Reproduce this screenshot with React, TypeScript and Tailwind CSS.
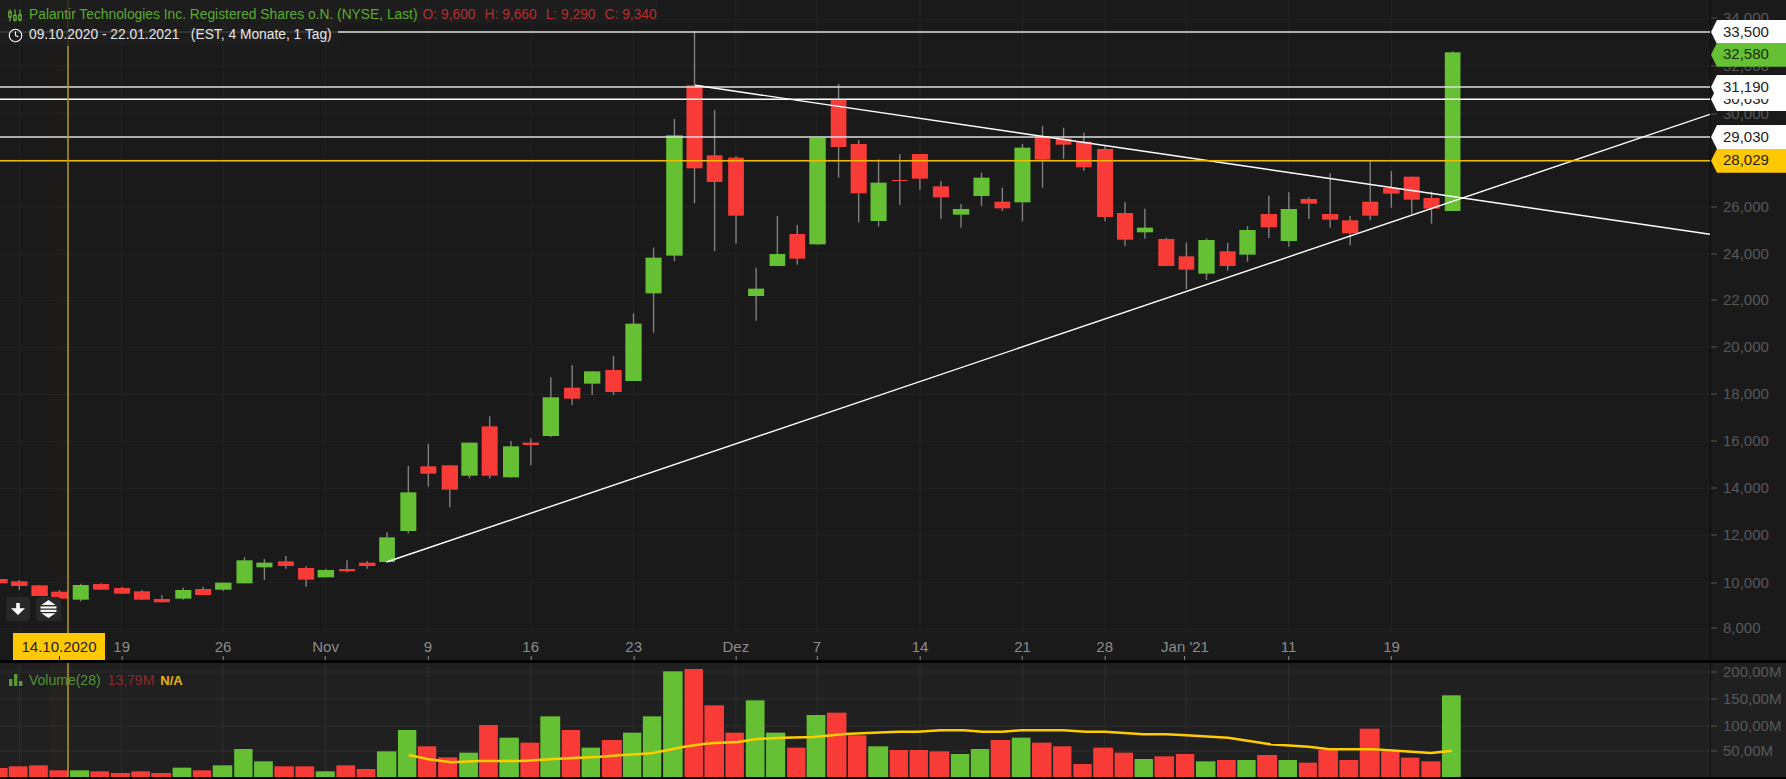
import { Clock } from "lucide-react";

type C = [number, number, number, number, number, number, "r" | "g"];

const GREEN = "#66c033";
const RED = "#f93b37";
const Z3 = 600 / 1568;
const Z2 = 586 / 1568;

const seg = (ox: number, oy: number, sx: number, sy: number, rows: C[]) =>
  rows.map(([l, r, wt, bt, bb, wb, c]) => ({
    x: ox + l * sx,
    w: (r - l) * sx,
    wt: oy + wt * sy,
    bt: oy + bt * sy,
    bb: oy + bb * sy,
    wb: oy + wb * sy,
    c,
  }));

const candles = [
  ...seg(0, 500, Z3, 1 / 3, [
    [-22, 20, 237, 237, 250, 250, "r"],
    [29, 72, 240, 244, 258, 270, "r"],
    [82, 125, 256, 256, 288, 288, "r"],
    [134, 177, 270, 275, 296, 296, "r"],
    [190, 232, 251, 255, 299, 304, "g"],
    [243, 285, 250, 252, 269, 269, "r"],
    [298, 340, 260, 264, 281, 281, "r"],
    [350, 392, 270, 274, 299, 299, "r"],
    [402, 444, 285, 297, 307, 307, "r"],
    [458, 500, 263, 270, 296, 299, "g"],
    [510, 552, 260, 267, 285, 285, "r"],
    [562, 605, 248, 248, 269, 273, "g"],
    [618, 660, 171, 181, 250, 250, "g"],
    [670, 712, 177, 188, 202, 240, "g"],
    [726, 768, 168, 184, 198, 206, "r"],
    [779, 821, 199, 204, 239, 260, "r"],
    [830, 873, 206, 210, 232, 232, "g"],
    [886, 928, 181, 207, 214, 217, "r"],
    [938, 981, 183, 188, 198, 206, "r"],
    [991, 1032, 97, 112, 186, 186, "g"],
  ]),
  ...seg(360, 300, 1 / 3, 1 / 3, [
    [121, 169, 498, 577, 693, 700, "g"],
    [181, 229, 432, 499, 521, 560, "r"],
    [245, 294, 496, 496, 569, 622, "r"],
    [304, 353, 428, 428, 527, 535, "g"],
    [365, 413, 349, 379, 527, 536, "r"],
    [429, 477, 423, 439, 532, 532, "g"],
    [488, 537, 415, 428, 435, 496, "r"],
    [548, 597, 232, 292, 408, 412, "g"],
    [612, 661, 195, 263, 296, 315, "r"],
    [672, 721, 214, 214, 251, 285, "g"],
    [736, 785, 168, 210, 276, 285, "r"],
    [796, 845, 40, 71, 243, 243, "g"],
  ]),
  ...seg(600, 60, Z3, 1 / 3, [
    [119, 161, 563, 593, 700, 818, "g"],
    [173, 216, 177, 226, 587, 603, "g"],
    [226, 268, -87, 76, 325, 430, "r"],
    [279, 320, 150, 286, 366, 573, "r"],
    [335, 376, 288, 293, 467, 551, "r"],
    [387, 429, 623, 686, 708, 782, "g"],
    [443, 484, 468, 582, 618, 618, "g"],
    [495, 536, 495, 522, 596, 614, "r"],
    [547, 590, 233, 233, 553, 553, "g"],
    [603, 644, 72, 120, 261, 353, "r"],
    [655, 697, 240, 252, 400, 487, "r"],
    [707, 749, 298, 368, 483, 500, "g"],
    [763, 804, 282, 360, 363, 435, "r"],
    [815, 857, 282, 282, 356, 390, "r"],
    [870, 912, 363, 379, 412, 477, "r"],
    [922, 965, 432, 447, 464, 503, "g"],
    [976, 1018, 338, 353, 408, 438, "g"],
    [1031, 1072, 383, 425, 445, 453, "r"],
    [1083, 1125, 252, 263, 427, 484, "g"],
    [1136, 1177, 198, 230, 299, 383, "r"],
    [1191, 1232, 203, 236, 254, 297, "r"],
    [1244, 1285, 218, 245, 322, 333, "r"],
    [1299, 1341, 258, 267, 471, 484, "r"],
    [1351, 1393, 427, 459, 539, 558, "r"],
    [1403, 1445, 446, 503, 517, 536, "g"],
    [1459, 1501, 533, 537, 618, 618, "r"],
    [1512, 1553, 548, 589, 629, 687, "r"],
  ]),
  ...seg(1100, 170, 1 / 3, 1 / 3, [
    [295, 344, 205, 210, 311, 330, "g"],
    [359, 407, 218, 244, 288, 302, "r"],
    [418, 467, 168, 180, 254, 275, "g"],
    [482, 531, 77, 132, 172, 204, "r"],
    [542, 591, 67, 117, 213, 230, "g"],
    [602, 651, 82, 87, 101, 147, "r"],
    [666, 715, 10, 132, 149, 173, "r"],
    [726, 775, 138, 151, 190, 226, "r"],
  ]),
  ...seg(1200, 0, Z2, 1 / 3, [
    [434, 477, 482, 605, 647, 660, "r"],
    [490, 534, 513, 564, 581, 623, "r"],
    [545, 588, 530, 530, 599, 642, "r"],
    [598, 641, 575, 594, 626, 671, "r"],
    [655, 697, 154, 157, 633, 633, "g"],
  ]),
];

type B = [number, number, number, "r" | "g"];
const bars = (ox: number, rows: B[]) =>
  rows.map(([l, r, t, c]) => ({
    x: ox + l * Z3,
    w: (r - l) * Z3,
    y: 500 + t / 3 - 663,
    c,
  }));

const volume = [
  ...bars(0, [
    [-30, 20, 804, "r"], [23, 72, 799, "r"], [76, 125, 796, "r"], [129, 178, 811, "r"],
    [183, 233, 811, "g"], [236, 285, 814, "r"], [289, 340, 819, "r"], [343, 392, 814, "r"],
    [395, 447, 819, "r"], [451, 500, 803, "g"], [504, 552, 811, "r"], [556, 607, 796, "g"],
    [612, 660, 747, "g"], [664, 713, 784, "g"], [717, 768, 799, "r"], [772, 821, 799, "r"],
    [825, 875, 814, "g"], [879, 928, 796, "r"], [932, 981, 807, "r"], [985, 1036, 754, "g"],
    [1040, 1088, 690, "g"], [1092, 1140, 739, "r"], [1145, 1195, 772, "r"], [1200, 1249, 758, "g"],
    [1252, 1301, 675, "r"], [1305, 1356, 713, "g"], [1360, 1409, 728, "r"], [1412, 1464, 649, "g"],
    [1468, 1516, 690, "r"], [1520, 1568, 743, "g"],
  ]),
  ...bars(600, [
    [5, 57, 720, "r"], [60, 108, 698, "g"], [112, 160, 649, "g"], [165, 216, 514, "g"],
    [221, 269, 507, "r"], [273, 324, 616, "r"], [328, 376, 698, "r"], [381, 430, 601, "g"],
    [434, 484, 698, "g"], [489, 537, 743, "r"], [540, 589, 645, "g"], [593, 644, 638, "r"],
    [648, 696, 706, "r"], [701, 753, 739, "g"], [757, 805, 750, "r"], [809, 857, 750, "r"],
    [861, 913, 754, "r"], [917, 965, 762, "g"], [969, 1017, 747, "g"], [1021, 1072, 720, "r"],
    [1076, 1125, 713, "g"], [1129, 1180, 728, "r"], [1184, 1232, 739, "r"], [1237, 1285, 792, "r"],
    [1289, 1341, 743, "r"], [1345, 1393, 758, "r"], [1397, 1445, 777, "g"], [1449, 1500, 769, "r"],
    [1505, 1553, 762, "r"],
  ]),
  ...bars(1186, [
    [26, 77, 784, "g"], [81, 130, 780, "r"], [134, 182, 780, "g"], [186, 238, 765, "r"],
    [242, 290, 780, "g"], [295, 342, 788, "r"], [346, 397, 750, "r"], [401, 450, 780, "r"],
    [454, 506, 686, "r"], [510, 558, 754, "r"], [562, 610, 773, "r"], [615, 665, 784, "r"],
    [669, 718, 586, "g"],
  ]),
];

const pts = (ox: number, rows: [number, number][]) =>
  rows.map(([x, y]) => `${(ox + x * Z3).toFixed(1)},${(500 + y / 3 - 663).toFixed(1)}`).join(" ");

const sma = [
  pts(0, [[1068, 765], [1120, 778], [1180, 787], [1250, 783], [1360, 783], [1460, 776], [1568, 770]]),
  pts(600, [
    [60, 765], [135, 760], [165, 753], [220, 740], [270, 732], [300, 729], [360, 726], [410, 717], [480, 713],
    [560, 711], [640, 702], [700, 699], [780, 695], [830, 695], [890, 691], [950, 691], [1000, 695], [1050, 695],
    [1100, 691], [1210, 691], [1270, 695], [1320, 695], [1420, 703], [1480, 703],
  ]),
  pts(1186, [[0, 706], [110, 713], [220, 733], [320, 740], [375, 748], [490, 748], [560, 753], [640, 759], [695, 752]]),
].join(" ");

const gridX = [19.5, 121.7, 223, 325.6, 428, 530.7, 633.7, 735.8, 817, 920, 1022.5, 1104.7, 1186, 1288.6, 1391.5];
const gridY = [19.3, 66.2, 113.1, 160, 206.9, 253.8, 300.7, 347.6, 394.5, 441.4, 488.3, 535, 582.7, 629];

const xLabels: [string, number][] = [
  ["19", 121.7], ["26", 223], ["Nov", 325.6], ["9", 428], ["16", 530.7], ["23", 633.7], ["Dez", 735.8],
  ["7", 817], ["14", 920], ["21", 1022.5], ["28", 1104.7], ["Jan '21", 1185], ["11", 1288.6], ["19", 1391.5],
];

const yLabels: [string, number][] = [
  ["34,000", 17.5], ["32,000", 66], ["30,000", 114], ["26,000", 207], ["24,000", 253.5], ["22,000", 300],
  ["20,000", 347], ["18,000", 394], ["16,000", 441], ["14,000", 488], ["12,000", 535], ["10,000", 582.5], ["8,000", 628],
];

const volLabels: [string, number][] = [
  ["200,00M", 9], ["150,00M", 36], ["100,00M", 63], ["50,00M", 88],
];

function Tag({ text, y, cls }: { text: string; y: number; cls: string }) {
  return (
    <div
      className={`absolute left-0 right-0 h-[24px] flex items-center pl-[12px] pb-[2px] text-[15px] leading-none [clip-path:polygon(0_50%,6px_0,100%_0,100%_100%,6px_100%)] ${cls}`}
      style={{ top: y - 12 }}
    >
      {text}
    </div>
  );
}

function AxisLabel({ text, y }: { text: string; y: number }) {
  return (
    <div className="absolute left-0 flex items-center -translate-y-1/2" style={{ top: y }}>
      <span className="w-[6px] h-px bg-[#555555]" />
      <span className="ml-[6px] mb-[2px] text-[15px] leading-none text-[#585858]">{text}</span>
    </div>
  );
}

export default function App() {
  return (
    <div className="w-full h-screen overflow-hidden bg-black flex flex-col font-['Liberation_Sans',Arial,sans-serif]">
      {/* price panel */}
      <div className="flex h-[660px] bg-[#1a1a1a]">
        <div className="relative w-[1710px] h-full flex flex-col">
          <svg width={1710} height={633} viewBox="0 0 1710 633" className="block overflow-hidden shrink-0">
            {gridX.map((x) => (
              <line key={x} x1={x} x2={x} y1={0} y2={633} stroke="#232323" strokeWidth={1} />
            ))}
            {gridY.map((y) => (
              <line key={y} x1={0} x2={1710} y1={y} y2={y} stroke="#232323" strokeWidth={1} />
            ))}
            <rect x={49} y={0} width={19} height={633} fill="#ffc800" fillOpacity={0.012} />
            {candles.map((k, i) => (
              <g key={i}>
                <line x1={k.x + k.w / 2} x2={k.x + k.w / 2} y1={k.wt} y2={k.wb} stroke="#808080" strokeWidth={1.4} />
                <rect x={k.x} y={k.bt} width={k.w} height={Math.max(k.bb - k.bt, 1)} fill={k.c === "g" ? GREEN : RED} />
              </g>
            ))}
            <line x1={0} x2={1710} y1={32} y2={32} stroke="#dedede" strokeWidth={1.5} />
            <line x1={0} x2={1710} y1={87} y2={87} stroke="#dedede" strokeWidth={1.5} />
            <line x1={0} x2={1710} y1={99.3} y2={99.3} stroke="#ffffff" strokeWidth={1.5} />
            <line x1={0} x2={1710} y1={137} y2={137} stroke="#dedede" strokeWidth={1.5} />
            <line x1={695} x2={1710} y1={85.3} y2={234.3} stroke="#ffffff" strokeWidth={1.4} />
            <line x1={386.5} x2={1710} y1={562} y2={114.3} stroke="#ffffff" strokeWidth={1.4} />
            <line x1={0} x2={1710} y1={160.7} y2={160.7} stroke="#f0bd00" strokeWidth={1.5} />
            <line x1={68} x2={68} y1={0} y2={633} stroke="#bd981c" strokeWidth={1.5} />
          </svg>

          {/* x axis */}
          <div className="relative h-[27px] text-[15px] leading-none text-[#8c8c8c]">
            {xLabels.map(([t, x]) => (
              <div key={t + x} className="absolute top-0 h-full -translate-x-1/2 flex flex-col items-center" style={{ left: x }}>
                <span className="mt-[6px]">{t}</span>
                <span className="mt-auto w-px h-[4px] bg-[#8c8c8c]" />
              </div>
            ))}
            <div className="absolute left-[13px] top-0 w-[92px] h-[27px] bg-[#ffc800] text-[#222222] flex flex-col items-center">
              <span className="mt-[6px]">14.10.2020</span>
              <span className="mt-auto w-px h-[4px] bg-[#222222]" />
            </div>
          </div>

          {/* legend */}
          <div className="absolute left-0 top-0 flex flex-col text-[13.8px] leading-none items-start">
            <div className="h-[23px] w-[657px] pt-[7px] bg-[#1f1f1f]/85 flex items-center pl-[8px] whitespace-nowrap">
              <svg width="14" height="13" viewBox="0 0 14 13" className="shrink-0 mr-[7px]" fill="none" stroke="#66c033" strokeWidth="1.2">
                <path d="M2 0.5v12M7 0.5v12M12 0.5v12" />
                <rect x="0.8" y="3" width="2.4" height="5" fill="#1f1f1f" />
                <rect x="5.8" y="6.5" width="2.4" height="4.5" fill="#1f1f1f" />
                <rect x="10.8" y="6" width="2.4" height="5" fill="#1f1f1f" />
              </svg>
              <span className="text-[#5cab2e]">Palantir Technologies Inc. Registered Shares o.N. (NYSE, Last)</span>
              <div className="ml-[5px] flex gap-[9px] text-[#b5302e]">
                <span>O: 9,600</span>
                <span>H: 9,660</span>
                <span>L: 9,290</span>
                <span>C: 9,340</span>
              </div>
            </div>
            <div className="h-[23px] w-[338px] pt-[1px] bg-[#1f1f1f]/85 flex items-center pl-[8px] whitespace-nowrap">
              <Clock size={15} color="#ffffff" strokeWidth={1.8} className="shrink-0 mr-[6px]" />
              <span className="text-[#e6e6e6] whitespace-pre">09.10.2020 - 22.01.2021   (EST, 4 Monate, 1 Tag)</span>
            </div>
          </div>

          {/* scroll buttons */}
          <div className="absolute left-[6px] top-[597px] flex gap-[6px]">
            <div className="w-[24px] h-[24px] rounded-[4px] bg-[#282828] flex items-center justify-center">
              <svg width="14" height="12" viewBox="0 0 14 12">
                <path d="M5.2 0h3.6v5.2H14L7 12 0 5.2h5.2z" fill="#ffffff" />
              </svg>
            </div>
            <div className="w-[25px] h-[24px] rounded-[4px] bg-[#282828] flex items-center justify-center">
              <svg width="17" height="18" viewBox="0 0 17 18">
                <path d="M8.5 0 15.5 5H1.5z" fill="#ffffff" />
                <rect x="0.5" y="6.4" width="16" height="2.1" fill="#ffffff" />
                <rect x="0.5" y="9.8" width="16" height="2.1" fill="#ffffff" />
                <path d="M8.5 18 15.5 13.2H1.5z" fill="#ffffff" />
              </svg>
            </div>
          </div>
        </div>

        {/* y axis */}
        <div className="relative flex-1 border-l border-[#0d0d0d]">
          {yLabels.map(([t, y]) => (
            <AxisLabel key={t} text={t} y={y} />
          ))}
          <Tag text="33,500" y={32} cls="bg-white text-[#222222]" />
          <Tag text="32,580" y={54.8} cls="bg-[#66c033] text-[#1a2a10]" />
          <Tag text="30,630" y={99.3} cls="bg-white text-[#222222]" />
          <Tag text="31,190" y={87} cls="bg-white text-[#222222]" />
          <Tag text="29,030" y={137} cls="bg-white text-[#222222]" />
          <Tag text="28,029" y={160.7} cls="bg-[#ffc800] text-[#222222]" />
        </div>
      </div>

      {/* separator */}
      <div className="h-[3px] bg-black shrink-0" />

      {/* volume panel */}
      <div className="flex h-[114px] bg-[#202020] shrink-0">
        <div className="relative w-[1710px] h-full">
          <svg width={1710} height={114} viewBox="0 0 1710 114" className="block overflow-hidden">
            {gridX.map((x) => (
              <line key={x} x1={x} x2={x} y1={0} y2={114} stroke="#2c2c2c" strokeWidth={1} />
            ))}
            {[9, 36, 63, 88].map((y) => (
              <line key={y} x1={0} x2={1710} y1={y} y2={y} stroke="#2c2c2c" strokeWidth={1} />
            ))}
            <rect x={49} y={0} width={19} height={114} fill="#ffc800" fillOpacity={0.015} />
            {volume.map((b, i) => (
              <rect key={i} x={b.x} y={b.y} width={b.w} height={114 - b.y} fill={b.c === "g" ? GREEN : RED} />
            ))}
            <polyline points={sma} fill="none" stroke="#ffcc00" strokeWidth={2.5} strokeLinejoin="round" />
            <line x1={68} x2={68} y1={0} y2={114} stroke="#bd981c" strokeWidth={1.5} />
          </svg>
          <div className="absolute left-[9px] top-[10px] flex items-center text-[14px] leading-none whitespace-nowrap">
            <svg width="14" height="12" viewBox="0 0 14 12" className="shrink-0 mr-[6px]" fill="#5b9a35">
              <rect x="0" y="5" width="3.4" height="7" />
              <rect x="5" y="0" width="3.4" height="12" />
              <rect x="10" y="7" width="3.4" height="5" />
            </svg>
            <span className="text-[#55913a]">Volume(28)</span>
            <span className="ml-[7px] text-[#8f2a2a]">13,79M</span>
            <span className="ml-[6px] text-[#e6b800] font-bold text-[13px]">N/A</span>
          </div>
        </div>
        <div className="relative flex-1 border-l border-[#0d0d0d]">
          {volLabels.map(([t, y]) => (
            <AxisLabel key={t} text={t} y={y} />
          ))}
        </div>
      </div>
    </div>
  );
}
